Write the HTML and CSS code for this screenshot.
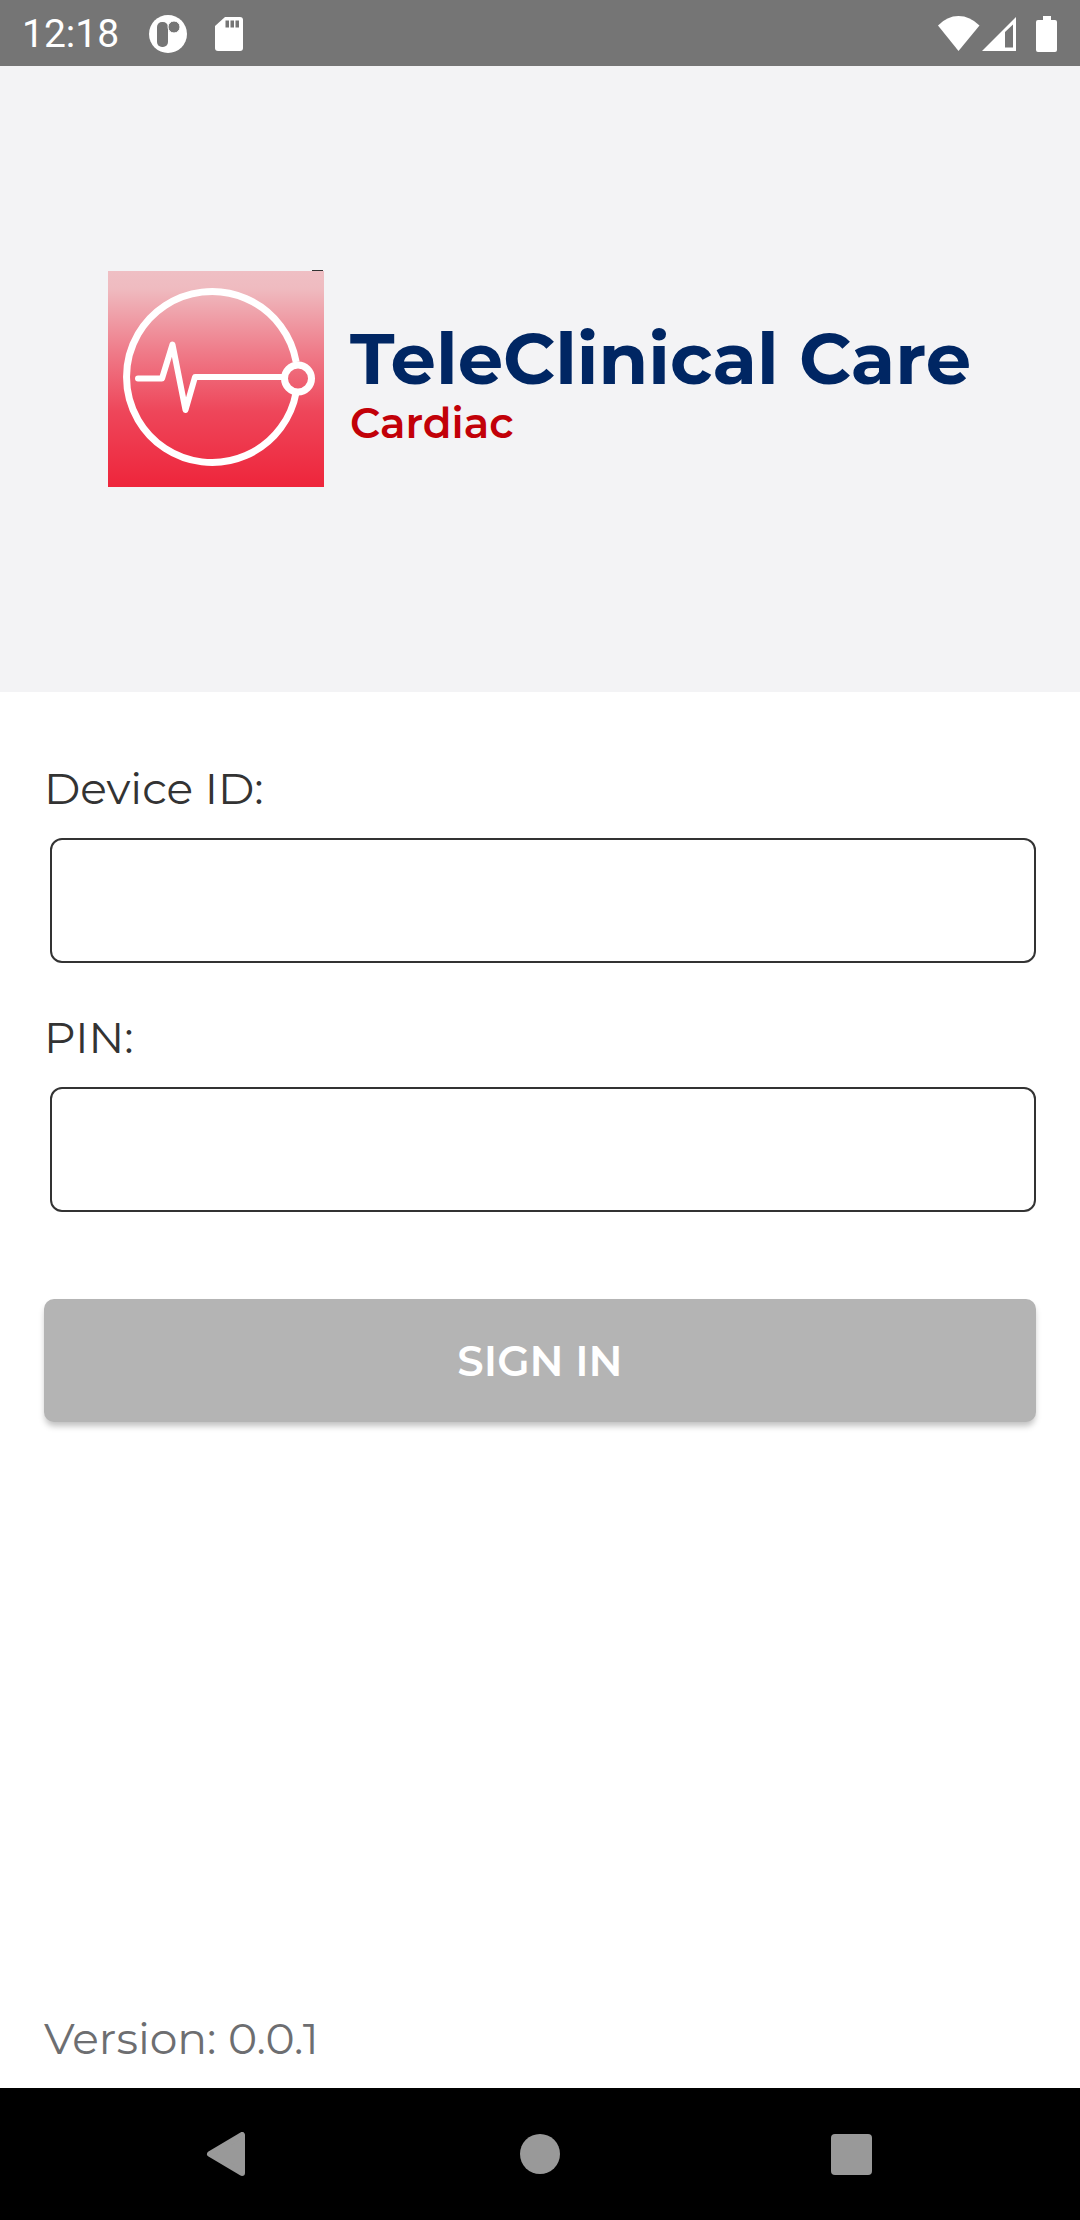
FILE: index.html
```html
<!DOCTYPE html>
<html lang="en">
<head>
<meta charset="utf-8">
<meta name="viewport" content="width=device-width, initial-scale=1">
<title>TeleClinical Care</title>
<link rel="stylesheet" href="styles.css">
</head>
<body>
<div class="screen">
  <header class="status">
    <time class="clock">12:18</time>
    <svg class="status-app" width="38" height="38" viewBox="0 0 38 38" aria-hidden="true">
      <circle cx="19" cy="19" r="19" fill="#fff"/>
      <rect x="8" y="7" width="11" height="25" rx="5" fill="#757575"/>
      <circle cx="25" cy="12" r="6" fill="#757575" stroke="#fff" stroke-width="1"/>
    </svg>
    <svg class="status-card" width="28" height="36" viewBox="0 0 28 36" aria-hidden="true">
      <path fill="#fff" d="M10 1H25Q28 1 28 4V32Q28 35 25 35H3Q0 35 0 32V10Z"/>
      <path fill="#757575" d="M10.500 4.500h3.500v7h-3.500zM15.500 4.500h3.500v7h-3.500zM20.500 4.500h3.500v7h-3.500z"/>
    </svg>
    <svg class="status-wifi" width="42" height="36" viewBox="0 0 42 36" aria-hidden="true">
      <path fill="#fff" d="M0 9.500Q9 0 20.500 0T41.500 9.500L20.500 35Z"/>
    </svg>
    <svg class="status-signal" width="34" height="36" viewBox="0 0 34 36" aria-hidden="true">
      <path fill="#fff" fill-rule="evenodd" d="M0 35 34 1V35ZM23 16V31.500H31V8.500Z"/>
    </svg>
    <svg class="status-battery" width="22" height="36" viewBox="0 0 22 36" aria-hidden="true">
      <path fill="#fff" d="M7 0h8v4h4q2 0 2 2v28q0 2-2 2H2q-2 0-2-2V6q0-2 2-2h5z"/>
    </svg>
  </header>

  <section class="hero">
    <svg class="logo" width="216" height="217" viewBox="0 0 216 217" aria-hidden="true">
      <defs>
        <linearGradient id="red" x1="0" y1="0" x2="0" y2="1">
          <stop offset="0" stop-color="#efbfc4"/>
          <stop offset=".08" stop-color="#efbbc0"/>
          <stop offset=".38" stop-color="#ef7a88"/>
          <stop offset=".65" stop-color="#ee465a"/>
          <stop offset="1" stop-color="#ee253b"/>
        </linearGradient>
      </defs>
      <path fill="url(#red)" d="M0 1H216V217H0Z"/>
      <path fill="#333" d="M204 0h11v1h-11z"/>
      <g fill="none" stroke="#fff" stroke-width="7">
        <path d="M188.200 92A85.500 85.500 0 1 0 188.200 122"/>
        <circle cx="190" cy="108.500" r="13.500"/>
        <path stroke-width="6" stroke-linecap="round" stroke-linejoin="round" d="M30 108.500H54L64.500 74.500 77.500 140 87 107H176"/>
      </g>
    </svg>
    <div class="brand">
      <h1 class="brand-name">TeleClinical Care</h1>
      <p class="brand-line">Cardiac</p>
    </div>
  </section>

  <main class="content">
    <form class="form">
      <div class="field">
        <label class="label" for="device">Device ID:</label>
        <input class="input" id="device" type="text">
      </div>
      <div class="field">
        <label class="label" for="pin">PIN:</label>
        <input class="input" id="pin" type="password">
      </div>
      <button class="submit" type="button">SIGN IN</button>
    </form>
    <p class="version">Version: 0.0.1</p>
  </main>

  <nav class="nav">
    <button class="nav-button" type="button" aria-label="Back">
      <svg width="44" height="44" viewBox="0 0 44 44"><path fill="#999" stroke="#999" stroke-width="6" stroke-linejoin="round" d="M37 3V41L5 22Z"/></svg>
    </button>
    <button class="nav-button" type="button" aria-label="Home">
      <svg width="44" height="44" viewBox="0 0 44 44"><circle cx="22" cy="22" r="20" fill="#999"/></svg>
    </button>
    <button class="nav-button" type="button" aria-label="Recent apps">
      <svg width="44" height="44" viewBox="0 0 44 44"><rect x="0" y="2" width="41" height="41" rx="4" fill="#999"/></svg>
    </button>
  </nav>
</div>
</body>
</html>
```
FILE: styles.css
```css
* {
  box-sizing: border-box;
}

body {
  margin: 0;
  background: #fff;
  color: #333;
  font-family: Montserrat, Inter, "Open Sans", sans-serif;
}

.screen {
  display: flex;
  flex-direction: column;
  min-height: 100vh;
}

.status {
  display: flex;
  align-items: center;
  padding: 2px 22px 0;
  background: #757575;
  color: #fff;
}

.clock {
  font-family: Roboto, sans-serif;
  font-size: 39px;
  line-height: 64px;
}

.status-app {
  margin-left: 30px;
}

.status-card {
  margin-left: 28px;
}

.status-wifi {
  margin-left: auto;
}

.status-signal {
  margin-left: 2px;
}

.status-battery {
  margin-left: 20px;
}

.hero {
  display: flex;
  align-items: center;
  gap: 26px;
  padding: 204px 100px 205px 108px;
  background: #f3f3f5;
}

.logo {
  flex: none;
}

.brand {
  padding-top: 8px;
}

.brand-name,
.brand-line {
  margin: 0;
  white-space: nowrap;
}

.brand-name {
  color: #002663;
  font-size: 72px;
  font-weight: 700;
  line-height: 80px;
}

.brand-line {
  color: #c20008;
  font-size: 42px;
  font-weight: 600;
  line-height: 50px;
}

.content {
  display: flex;
  flex: 1;
  flex-direction: column;
  justify-content: space-between;
  padding: 64px 44px 18px;
}

.form {
  display: flex;
  flex-direction: column;
}

.field {
  display: flex;
  flex-direction: column;
  gap: 18px;
  margin-bottom: 42px;
}

.label,
.version {
  font-size: 44px;
  font-weight: 400;
  line-height: 64px;
}

.input {
  height: 125px;
  margin-left: 6px;
  padding: 0 24px;
  border: 2px solid #333;
  border-radius: 12px;
  background: #fff;
  font: inherit;
  font-size: 44px;
}

.submit {
  height: 123px;
  margin-top: 45px;
  border: 0;
  border-radius: 10px;
  background: #b4b4b4;
  box-shadow: 0 5px 6px -1px rgb(0 0 0 / 25%);
  color: #fff;
  font: inherit;
  font-size: 42px;
  font-weight: 600;
}

.version {
  margin: 0;
  color: #6d6e71;
}

.nav {
  display: flex;
  padding: 0 70px;
  background: #000;
}

.nav-button {
  display: flex;
  flex: 1;
  align-items: center;
  justify-content: center;
  height: 132px;
  padding: 0;
  border: 0;
  background: none;
}
```
